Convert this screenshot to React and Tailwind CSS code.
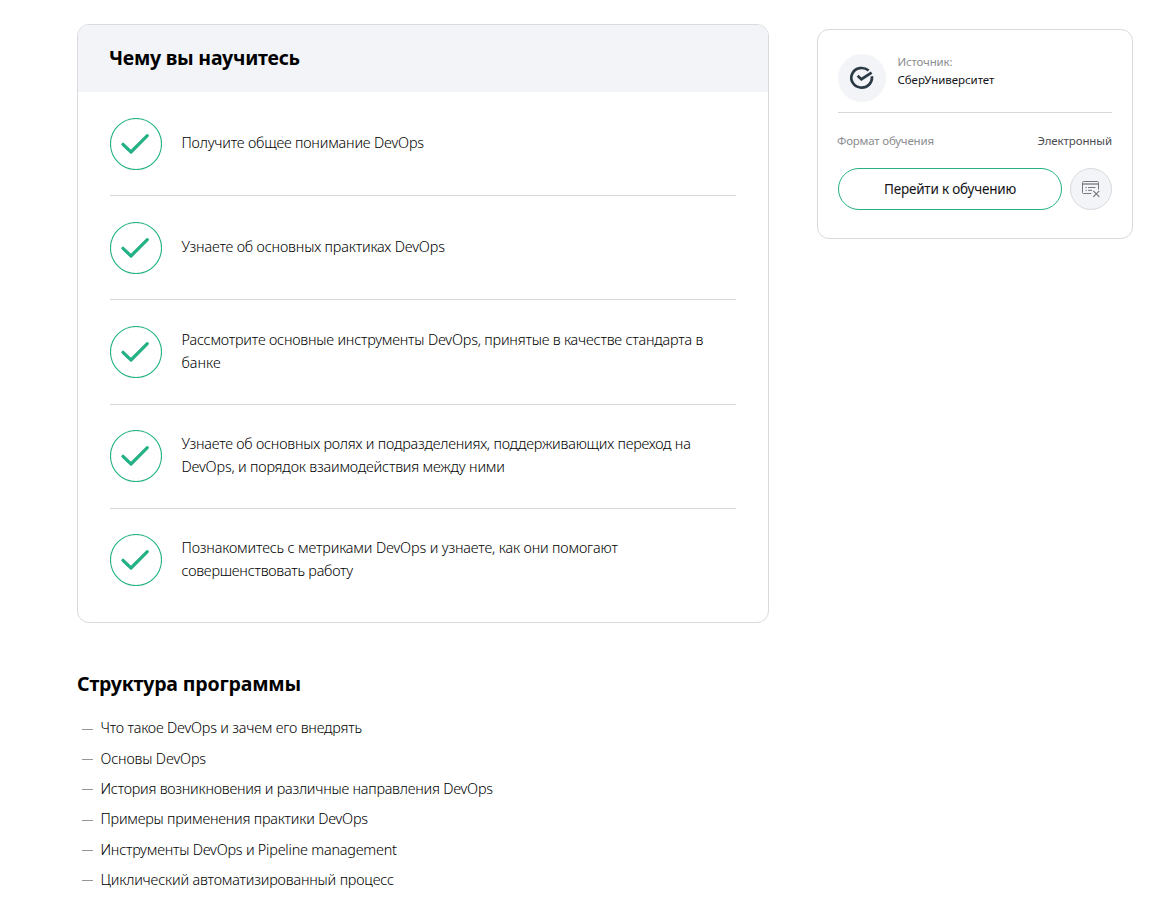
const skills = [
  {
    row: 'pt-[26px] pb-[25px] border-b',
    lines: [['Получите общее понимание DevOps', 'tracking-[-0.19px]']],
  },
  {
    row: 'pt-[26px] pb-[25px] border-b',
    lines: [['Узнаете об основных практиках DevOps', 'tracking-[-0.158px]']],
  },
  {
    row: 'pt-[26px] pb-[26px] border-b',
    lines: [
      ['Рассмотрите основные инструменты DevOps, принятые в качестве стандарта в', 'tracking-[-0.198px]'],
      ['банке', 'tracking-normal'],
    ],
  },
  {
    row: 'pt-[25px] pb-[26px] border-b',
    lines: [
      ['Узнаете об основных ролях и подразделениях, поддерживающих переход на', 'tracking-[-0.21px]'],
      ['DevOps, и порядок взаимодействия между ними', 'tracking-[-0.184px]'],
    ],
  },
  {
    row: 'pt-[25px]',
    lines: [
      ['Познакомитесь с метриками DevOps и узнаете, как они помогают', 'tracking-[-0.153px]'],
      ['совершенствовать работу', 'tracking-[-0.226px]'],
    ],
  },
];

const program = [
  ['Что такое DevOps и зачем его внедрять', 'tracking-[-0.203px]'],
  ['Основы DevOps', 'tracking-[-0.16px]'],
  ['История возникновения и различные направления DevOps', 'tracking-[-0.233px]'],
  ['Примеры применения практики DevOps', 'tracking-[-0.218px]'],
  ['Инструменты DevOps и Pipeline management', 'tracking-[-0.22px]'],
  ['Циклический автоматизированный процесс', 'tracking-[-0.176px]'],
];

function CheckCircle() {
  return (
    <svg className="size-[52px] shrink-0" viewBox="0 0 52 52" fill="none" stroke="#24b185">
      <circle cx="26" cy="26" r="25.5" strokeWidth="1.1" />
      <path d="M13 26.3 21 34 37.3 17.7" strokeWidth="3.2" strokeLinecap="round" strokeLinejoin="round" />
    </svg>
  );
}

function SourceLogo() {
  return (
    <svg className="size-6" viewBox="0 0 24 24" fill="none" stroke="#2b3a45" strokeWidth="2.7">
      <path d="M18.6 4.6A10.3 9.8 0 1 0 21.8 10.3" />
      <path d="M7.6 9.7 11.4 13.2 21.6 6.6" />
    </svg>
  );
}

function WindowCloseIcon() {
  return (
    <svg className="size-[18px]" viewBox="0 0 18 18" fill="none" stroke="#74797f">
      <path d="M9.3 13.5H1.5a1 1 0 0 1-1-1V2.5a1 1 0 0 1 1-1H15.5a1 1 0 0 1 1 1V9.5" />
      <path d="M.5 4H16.5" strokeWidth="1.3" />
      <path d="M3.5 7.5H4.8M6 7.5H13.5M3.5 10.3H4.8M6 10.3H10" />
      <path d="M11.3 10.8 17.3 16.8M17.3 10.8 11.3 16.8" strokeWidth="1.2" />
    </svg>
  );
}

export default function App() {
  return (
    <div className="flex h-[913px] w-[1161px] items-start gap-12 overflow-hidden bg-white pl-[77px] pt-6 font-['Noto_Sans',sans-serif] text-[#131316]">
      <main className="w-[692px]">
        <section className="h-[599px] overflow-hidden rounded-xl border border-[#d9dadd]">
          <header className="flex h-[67px] items-center bg-[#f3f4f8] pb-px pl-[31px]">
            <h2 className="whitespace-nowrap text-[19.5px] font-bold tracking-[-0.24px] text-black">Чему вы научитесь</h2>
          </header>
          <ul className="px-8">
            {skills.map(({ row, lines }) => (
              <li key={lines[0][0]} className={`flex items-center gap-[19.5px] border-[#d5d7da] ${row}`}>
                <CheckCircle />
                <div className={`text-[14.4px] font-light leading-[23px] text-black ${lines.length === 1 ? 'pb-[3px]' : 'pb-0.5'}`}>
                  {lines.map(([text, tracking]) => (
                    <p key={text} className={`whitespace-nowrap ${tracking}`}>{text}</p>
                  ))}
                </div>
              </li>
            ))}
          </ul>
        </section>
        <section className="pt-[47px]">
          <h2 className="whitespace-nowrap text-[19.5px] font-bold leading-7 tracking-[-0.17px] text-black">Структура программы</h2>
          <ul className="pl-[5px] pt-[15px] text-[14.4px] font-light text-black">
            {program.map(([text, tracking]) => (
              <li key={text} className="flex h-[30.35px] items-center gap-[7.5px]">
                <span className="mt-0.5 h-px w-[11px] bg-[#939598]" />
                <span className={`whitespace-nowrap ${tracking}`}>{text}</span>
              </li>
            ))}
          </ul>
        </section>
      </main>
      <aside className="mt-[5px] h-[210px] w-[316px] rounded-xl border border-[#d9dadd] px-5 pt-6">
        <div className="flex h-[59px] gap-[11.5px] border-b border-[#d5d7da]">
          <div className="flex size-12 items-center justify-center rounded-full bg-[#f3f4f8]">
            <SourceLogo />
          </div>
          <div className="-mt-px whitespace-nowrap text-[11.5px] leading-[18px]">
            <p className="tracking-[-0.18px] text-[#8b8d91]">Источник:</p>
            <p className="tracking-[-0.06px]">СберУниверситет</p>
          </div>
        </div>
        <div className="-ml-px mt-[19px] flex h-[18px] items-center justify-between whitespace-nowrap text-[11.5px]">
          <span className="tracking-[-0.2px] text-[#8b8d91]">Формат обучения</span>
          <span className="tracking-[-0.1px] text-[#4b4c50]">Электронный</span>
        </div>
        <div className="mt-[18px] flex gap-2">
          <button className="h-[42px] w-56 whitespace-nowrap rounded-full border border-[#24b185] text-[13.5px] tracking-[-0.2px]">
            Перейти к обучению
          </button>
          <button className="flex size-[42px] items-center justify-center rounded-full border border-[#d9dadd] bg-[#f3f4f8]">
            <WindowCloseIcon />
          </button>
        </div>
      </aside>
    </div>
  );
}
